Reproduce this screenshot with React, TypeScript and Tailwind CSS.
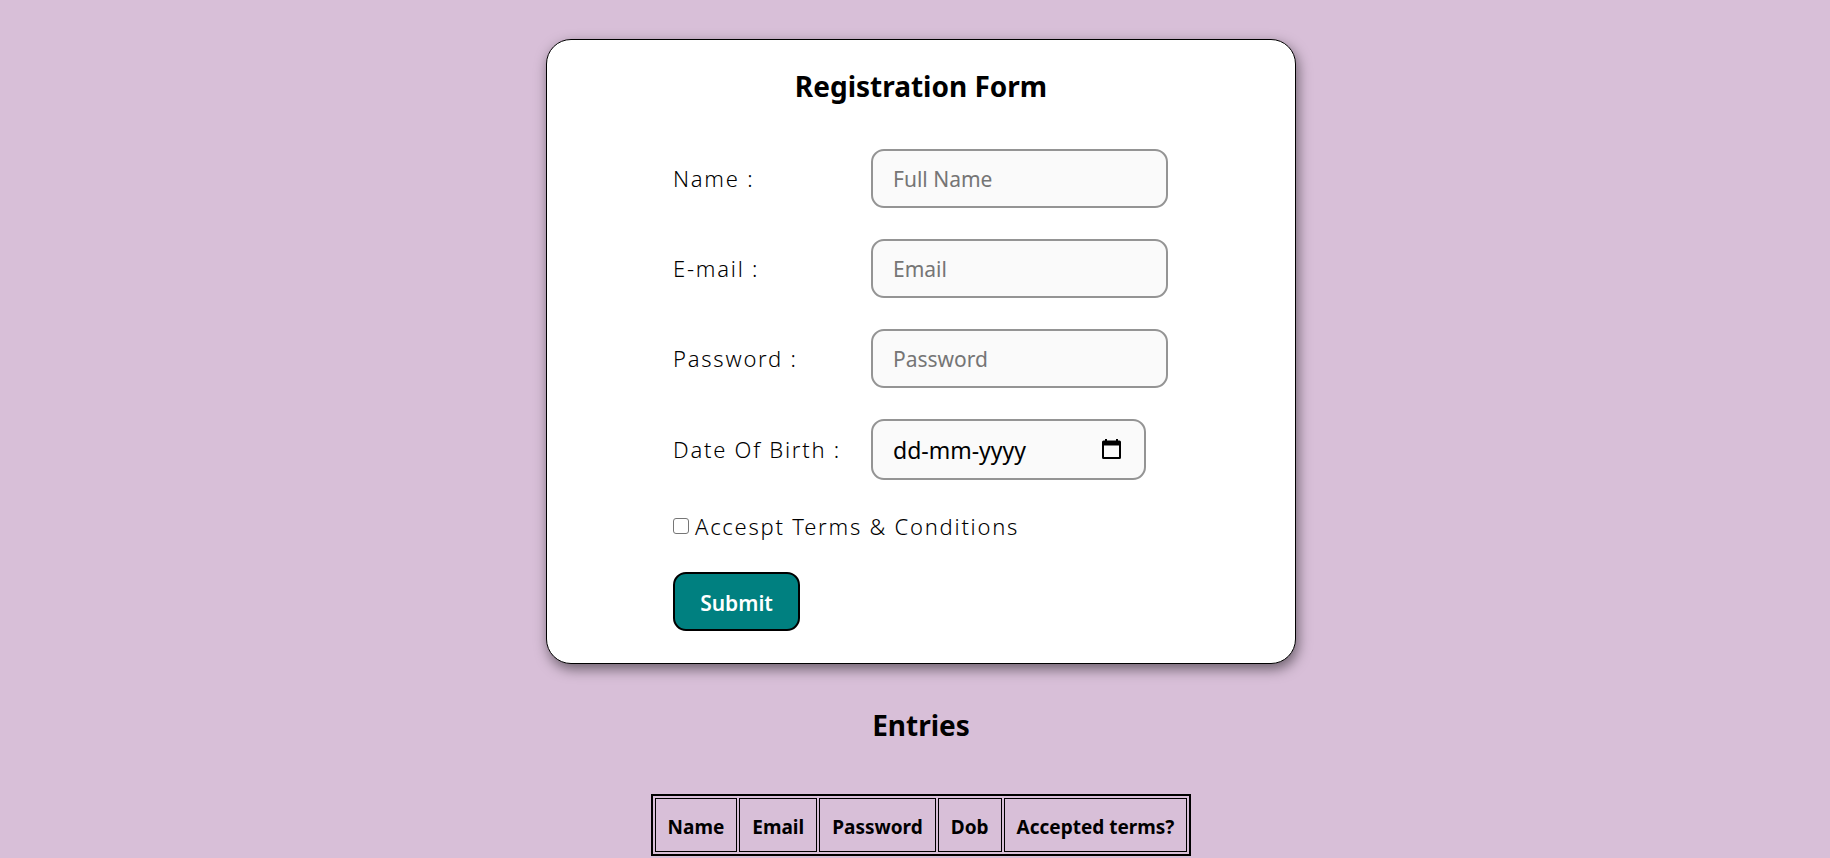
import { useState } from "react";
import type { ReactNode } from "react";

type FieldProps = { id: string; label: string; children: ReactNode };

const inputClass =
  "rounded-[13px] border-2 border-[#949494] bg-[#fafafa] px-5 text-black outline-none";

const textInputClass = `${inputClass} h-[59px] w-[297px] text-[21px] placeholder:text-[#757575]`;

const labelTextClass = "text-[22px] font-light tracking-[0.08em]";

function Field({ id, label, children }: FieldProps) {
  return (
    <div className="flex items-center">
      <label htmlFor={id} className={`${labelTextClass} w-[198px] shrink-0`}>
        {label}
      </label>
      {children}
    </div>
  );
}

function CalendarIcon() {
  return (
    <svg viewBox="0 0 19 20" className="h-5 w-[19px]" aria-hidden="true">
      <path
        fillRule="evenodd"
        d="M3 0h2v1.500h9V0h2v1.500h1.500A1.500 1.500 0 0 1 19 3v15.500a1.500 1.500 0 0 1-1.500 1.500h-16A1.500 1.500 0 0 1 0 18.500V3a1.500 1.500 0 0 1 1.500-1.500H3zM2 6.500V18h15V6.500z"
        fill="#000"
      />
    </svg>
  );
}

export default function App() {
  const [accepted, setAccepted] = useState(false);
  const columns = ["Name", "Email", "Password", "Dob", "Accepted terms?"];

  return (
    <main className="flex min-h-screen flex-col items-center bg-[#d8bfd8] pt-[39px] pl-3 font-['Noto_Sans','Open_Sans',sans-serif] text-black">
      <form
        onSubmit={(e) => e.preventDefault()}
        className="w-full max-w-[750px] rounded-[25px] border border-black bg-white px-[126px] pt-[26px] pb-8 shadow-[2px_5px_13px_rgba(0,0,0,0.5)]"
      >
        <h1 className="text-center text-[28px] leading-10 font-bold">Registration Form</h1>
        <div className="mt-[43px] flex flex-col gap-[31px]">
          <Field id="name" label="Name :">
            <input id="name" type="text" placeholder="Full Name" className={textInputClass} />
          </Field>
          <Field id="email" label="E-mail :">
            <input id="email" type="email" placeholder="Email" className={textInputClass} />
          </Field>
          <Field id="password" label="Password :">
            <input id="password" type="password" placeholder="Password" className={textInputClass} />
          </Field>
          <Field id="dob" label="Date Of Birth :">
            <div className="relative">
              <input
                id="dob"
                type="text"
                placeholder="dd-mm-yyyy"
                className={`${inputClass} h-[61px] w-[275px] text-[23px] placeholder:text-black`}
              />
              <button type="button" aria-label="Open calendar" className="absolute top-5 right-[25px]">
                <CalendarIcon />
              </button>
            </div>
          </Field>
        </div>
        <div className="mt-[30px] flex h-8 items-center gap-1.5">
          <input
            id="terms"
            type="checkbox"
            checked={accepted}
            onChange={(e) => setAccepted(e.target.checked)}
            className="size-4 appearance-none rounded-[3px] border border-[#767676] bg-white checked:bg-[#008080]"
          />
          <label htmlFor="terms" className={labelTextClass}>
            Accespt Terms &amp; Conditions
          </label>
        </div>
        <button
          type="submit"
          className="mt-[30px] h-[59px] w-[127px] rounded-[13px] border-2 border-black bg-[#008080] pt-1 text-[21px] font-semibold text-white"
        >
          Submit
        </button>
      </form>
      <h2 className="mt-[41px] text-[28px] leading-10 font-bold">Entries</h2>
      <table className="mt-[49px] border-separate border-spacing-[2px] border-2 border-black">
        <thead>
          <tr>
            {columns.map((column) => (
              <th key={column} className="h-[54px] border border-black px-3 pt-1 text-[19px] font-bold">
                {column}
              </th>
            ))}
          </tr>
        </thead>
      </table>
    </main>
  );
}
